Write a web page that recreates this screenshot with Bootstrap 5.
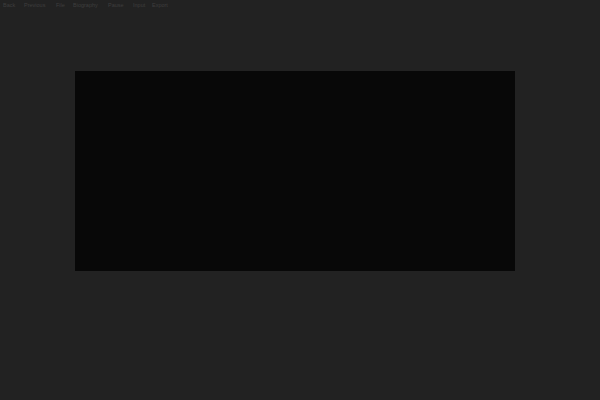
<!DOCTYPE html>
<html lang="en">
<head>
<meta charset="utf-8">
<title>Player</title>
<link rel="stylesheet" href="https://cdn.jsdelivr.net/npm/bootstrap@5.3.0/dist/css/bootstrap.min.css">
<style>
html, body { height: 100%; }
body { background: #222222; margin: 0; overflow: hidden; }
.top-menu { height: 71px; padding: 2px 0 0 3px; font: 5.5px/6px "Liberation Sans", Arial, sans-serif; color: #3e3e3e; }
.top-menu span { display: block; white-space: nowrap; }
.m-back { width: 21px; }
.m-prev { width: 32px; }
.m-file { width: 17px; }
.m-bio { width: 35px; }
.m-pause { width: 25px; }
.m-input { width: 19px; }
.stage-box { width: 440px; height: 200px; margin-left: 75px; background: #080808; }
</style>
</head>
<body>
<div class="top-menu d-flex align-items-start">
  <span class="m-back">Back</span>
  <span class="m-prev">Previous</span>
  <span class="m-file">File</span>
  <span class="m-bio">Biography</span>
  <span class="m-pause">Pause</span>
  <span class="m-input">Input</span>
  <span>Export</span>
</div>
<div class="stage-box"></div>
<script src="https://cdn.jsdelivr.net/npm/bootstrap@5.3.0/dist/js/bootstrap.bundle.min.js"></script>
</body>
</html>
